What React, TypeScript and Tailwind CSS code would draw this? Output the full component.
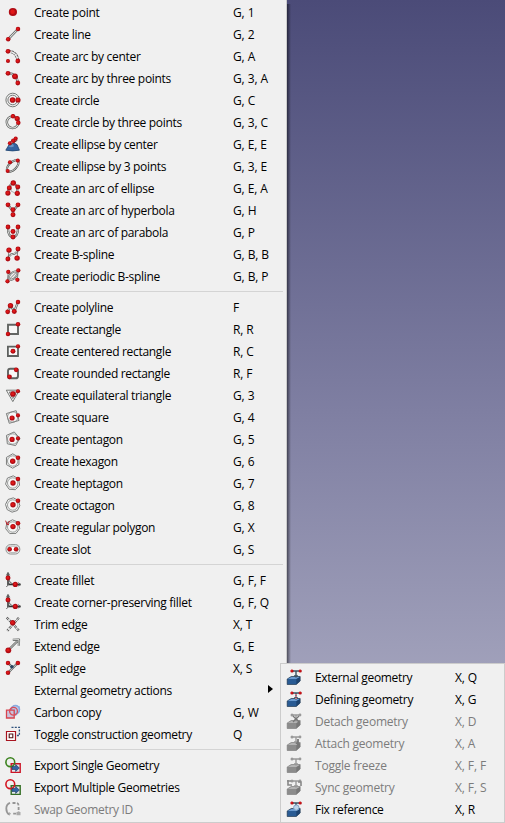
import React from "react";

type P = [number, number, number?];

const FONT = "font-['Open_Sans','Noto_Sans',sans-serif]";

function Balls({ at }: { at: P[] }) {
  return (
    <>
      {at.map(([x, y, r = 2.3], i) => (
        <g key={i}>
          <circle cx={x} cy={y} r={r * 1.08} fill="#b00c14" />
          <circle cx={x - 0.3} cy={y - 0.3} r={r * 0.6} fill="#e01818" />
        </g>
      ))}
    </>
  );
}

/* Double stroked edge: dark outline with a light core */
function Edge({ d, w = 2.4 }: { d: string; w?: number }) {
  return (
    <g fill="none" strokeLinejoin="round">
      <path d={d} stroke="#585b59" strokeWidth={w} />
      <path d={d} stroke="#e6e7e6" strokeWidth={w * 0.42} />
    </g>
  );
}

function ring(cx: number, cy: number, r: number) {
  return `M${cx - r} ${cy}a${r} ${r} 0 1 0 ${2 * r} 0a${r} ${r} 0 1 0 ${-2 * r} 0`;
}

function poly(n: number, cx: number, cy: number, r: number, rot: number) {
  const pts: string[] = [];
  for (let i = 0; i < n; i++) {
    const a = rot + (i * 2 * Math.PI) / n;
    pts.push(`${(cx + r * Math.cos(a)).toFixed(2)} ${(cy + r * Math.sin(a)).toFixed(2)}`);
  }
  return `M${pts.join("L")}Z`;
}

function Polygon({ n, rot, balls }: { n: number; rot: number; balls: P[] }) {
  return (
    <>
      <path d={poly(n, 7.7, 8, 7.2, rot)} fill="#f6f6f6" stroke="#6f7270" strokeWidth=".9" />
      <circle cx="7.7" cy="8" r="5.2" fill="none" stroke="#858986" strokeWidth=".8" />
      <Balls at={balls} />
    </>
  );
}

function Fillet() {
  return (
    <>
      <path d="M3 1V12.5H15.5" fill="none" stroke="#2c2f2e" strokeWidth="1.5" />
      <path d="M4 7.5Q4.5 11.5 9 12" fill="none" stroke="#777" strokeWidth="1.2" />
      <path d="M1.4 3.5L3 .3L4.7 3.5M1.3 15L4.8 11.3M13 10.7L16 12.5L13 14" fill="none" stroke="#666" strokeWidth="1" />
      <Balls at={[[3, 6, 2.3], [10.3, 12.4, 2.4]]} />
    </>
  );
}

function Export({ a, b }: { a: string; b: string }) {
  return (
    <>
      <path d="M6.2 6.7H15.2V15.4H6.2Z" fill="#e4e8ed" stroke={b} strokeWidth="1.4" />
      <circle cx="5.3" cy="5.2" r="4.4" fill="none" stroke={a} strokeWidth="1.6" />
      <path d="M7 9.5H10.6V7.6L14.4 11L10.6 14.4V12.5H7Z" fill="#3465a4" stroke="#17365e" strokeWidth=".6" />
    </>
  );
}

function Ext({ kind }: { kind: string }) {
  const off = kind === "detach" || kind === "attach" || kind === "freeze" || kind === "sync";
  const dark = off ? "#777" : "#12283f";
  return (
    <>
      <path d="M1.2 10L5.2 7.5H14.2V12L10.3 15.5H1.2Z" fill={off ? "#8c8c8c" : "#295b94"} stroke={dark} strokeWidth=".6" />
      <path d="M1.7 10L5.4 7.9H13.7L10.3 10Z" fill={off ? "#b4b4b4" : "#6b9bd0"} />
      <path d="M10.3 10.2L14 8V12L10.3 15.2Z" fill={off ? "#777" : "#1d436f"} />
      <path d="M6 2H14M10 2V8.5M8 6.9H12" stroke={off ? "#999" : "#3c5361"} strokeWidth="1.4" />
      {off ? (
        <>
          <circle cx="6" cy="2" r="1.5" fill="#999" />
          <circle cx="14" cy="2" r="1.4" fill="#999" />
        </>
      ) : (
        <Balls at={[[6, 2, 1.5], [14.2, 2, 1.5]]} />
      )}
      {kind === "define" && <path d="M10 3V9" stroke="#d27886" strokeWidth="2" strokeDasharray="1 1" />}
      {kind === "detach" && <path d="M7 3L13 9M13 3L7 9" stroke="#777" strokeWidth="1.3" />}
      {kind === "attach" && <path d="M12 4V10M10 8L13 9" stroke="#777" strokeWidth="1.8" />}
      {kind === "sync" && <path d="M2 1V6H6M1 2H5M12 3H15V7" fill="none" stroke="#888" strokeWidth="1.6" />}
      {kind === "fix" && <circle cx="10.3" cy="6.6" r="2.7" fill="#bed5e9" stroke="#7ba0c6" strokeWidth="1" />}
    </>
  );
}

const icons: Record<string, React.ReactNode> = {
  point: <Balls at={[[7.9, 8, 3.8]]} />,
  line: <><Edge d="M3.2 13.2L13 3" /><Balls at={[[3.2, 13.2, 2.1], [13, 3, 2.1]]} /></>,
  arcc: <><path d="M3 3.3Q12 3.5 12.9 13" fill="none" stroke="#666" strokeWidth="3" strokeDasharray="2.5 .6" /><path d="M3 3.3Q12 3.5 12.9 13" fill="none" stroke="#eee" strokeWidth="1.3" /><Balls at={[[3, 3.3, 2.2], [3, 13, 1.9], [12.8, 13, 2.2]]} /></>,
  arc3: <><Edge d="M3 3.3Q12 3.5 12.9 13" /><Balls at={[[3, 3.3, 2.2], [10, 6.3, 2.7], [12.8, 13, 2.2]]} /></>,
  circle: <><path d={ring(7.7, 8, 6.8)} fill="none" stroke="#777a78" /><path d={ring(7.7, 8, 4.8)} fill="none" stroke="#777a78" /><Balls at={[[7.6, 8, 2.6], [13, 8, 2.4]]} /></>,
  circle3: <><Edge d={ring(7.6, 8.3, 5.8)} /><Balls at={[[8, 2.2, 2.1], [12.2, 4.6, 2.4], [13.3, 8.8, 2.1]]} /></>,
  ellc: (
    <>
      <path d="M.8 14.2L4 8.8L8 6.5L12 8.6L14.4 14.2Q7.6 15.6 .8 14.2Z" fill="#3464a1" stroke="#1c416d" strokeWidth=".8" />
      <path d="M3.3 10.3L8 8L9 10.2Q6 12.2 3.3 10.3Z" fill="#6b95c5" />
      <path d="M3.6 7.3L10.5 1.8L12 4.5L5.5 8.8Z" fill="#ddd" stroke="#444" strokeWidth=".9" />
      <Balls at={[[4.8, 7.3, 1.8], [8.3, 4.8, 2.1], [10.7, 2.6, 1.9]]} />
    </>
  ),
  ell3: (
    <>
      <g transform="rotate(-44 7.7 8)" fill="none">
        <ellipse cx="7.7" cy="8" rx="7.4" ry="3.7" stroke="#4d504e" strokeWidth="2.1" />
        <ellipse cx="7.7" cy="8" rx="7.4" ry="3.7" stroke="#e2e3e2" strokeWidth=".8" />
      </g>
      <Balls at={[[12.8, 2.6, 1.9], [5, 4.3, 1.9], [2.7, 13, 1.9]]} />
    </>
  ),
  arcell: <><Edge d="M3 13C3 7 6 2 9.5 3.5C13 6 12.6 10 12.3 13.5" w={2} /><path d="M6 5L6 11L10 13" fill="none" stroke="#999" strokeWidth=".8" /><Balls at={[[8.3, 3, 2.5], [12.8, 7, 2.3], [12.3, 13.3, 2.4], [4.3, 8, 2.3], [2.9, 13.1, 2.4]]} /></>,
  hyper: <><Edge d="M3 3L8 9L13 3M8 8V13" w={2.2} /><Balls at={[[3, 2.8, 2.2], [13, 2.8, 2.2], [8, 7.8], [8, 12.8]]} /></>,
  para: <><Edge d="M3 3Q2.8 13 8 13Q13.2 13 13 3" w={2.2} /><Balls at={[[3, 3, 2.2], [13, 3, 2.2], [8, 7.6], [8, 13]]} /></>,
  bspline: <><path d="M4 4L3 13M13 3L12 12" fill="none" stroke="#777" strokeWidth=".9" /><Edge d="M3 13Q5 7.5 8 8T13 3" w={2} /><Balls at={[[4, 4.1, 2.5], [13, 3], [2.9, 13], [12.1, 12.1, 2.5]]} /></>,
  pbspline: <><path d="M3.3 3.7L2.3 13.3L13.3 2.3L12.3 11.7" fill="none" stroke="#777" strokeWidth=".9" /><Edge d="M4 11C3 5 11 2 12 4S9 14 4 11" w={1.8} /><Balls at={[[3.3, 3.9, 2], [13.3, 2.4, 2], [12.4, 11.8, 2], [2.5, 13.3, 2]]} /></>,
  polyline: <><Edge d="M2.7 12.8L5.3 6.4L9.3 12.4L13 3" w={2.2} /><Balls at={[[2.7, 12.8, 2.2], [5.5, 6.6, 2.5], [9.3, 12.4, 2.3], [13, 3, 2.1]]} /></>,
  rect: <><path d="M3 3.7H13V13H3Z" fill="#f7f7f7" stroke="#626563" strokeWidth="1.9" /><Balls at={[[13, 3.3, 2.1], [3, 13, 2.1]]} /></>,
  crect: <><path d="M2.9 3.6H13V13H2.9Z" fill="#f7f7f7" stroke="#5e615f" strokeWidth="1.8" /><Balls at={[[8, 8.2, 2.3], [13, 3.4, 2]]} /></>,
  rrect: <><rect x="3" y="3.7" width="10" height="9.6" rx="2.4" fill="#f7f7f7" stroke="#5f6260" strokeWidth="1.9" /><Balls at={[[11.2, 4.8, 2.2], [4.5, 11.8, 2.2]]} /></>,
  tri: <><path d="M1.3 3.2H14.4L7.8 14.6Z" fill="#f7f7f7" stroke="#686b69" strokeWidth=".9" /><path d="M4.2 5H11.6L7.8 11.6Z" fill="none" stroke="#777" strokeWidth=".9" /><Balls at={[[8, 7, 2.6], [13, 4.2, 1.9]]} /></>,
  square: <Polygon n={4} rot={0.5} balls={[[7.1, 9, 2.4], [13, 6.4, 1.9]]} />,
  penta: <Polygon n={5} rot={-0.1} balls={[[7.1, 8.4, 2.4], [13, 7.4, 1.9]]} />,
  hexa: <Polygon n={6} rot={-0.52} balls={[[7.7, 8.3, 2.5], [13, 4.8, 2.1]]} />,
  hepta: <Polygon n={7} rot={-0.6} balls={[[8, 8, 2.5], [13, 4, 2.1]]} />,
  octa: <Polygon n={8} rot={-0.7} balls={[[8, 7.8, 2.5], [13, 3.8, 2.1]]} />,
  regular: <><Polygon n={7} rot={-0.7} balls={[[8, 7.6, 2.5], [13, 4.2, 2.1]]} /><path d="M.6 1.7L2.3 5.8L4.5 2M1 4.5L4 5.8" fill="none" stroke="#b5242c" /></>,
  slot: <><rect x="1" y="3.6" width="13.8" height="9.4" rx="4.4" fill="#eee" stroke="#858886" strokeWidth=".9" /><rect x="2.6" y="5.2" width="10.6" height="6.2" rx="3.1" fill="#fff" stroke="#999" strokeWidth=".7" /><Balls at={[[4.7, 8.3, 2.1], [11, 8.3, 2.1]]} /></>,
  fillet: <Fillet />,
  trim: <><path d="M1.7 1.5L8 8L13.8 14.6M13.8 1.8L2.3 14.8" fill="none" stroke="#555" strokeWidth="2.2" strokeDasharray="3 .8" /><path d="M1.7 1.5L8 8L13.8 14.6M13.8 1.8L2.3 14.8" fill="none" stroke="#eee" strokeWidth=".9" /><Balls at={[[7.7, 6.8, 2.5]]} /></>,
  extend: <><Edge d="M4 11.5L12.8 2.7M7.8 1.8L14 1.6L13.8 7.8" w={2.2} /><Balls at={[[3.3, 12.3, 2.7]]} /></>,
  split: <><Edge d="M3 12.8L12.7 3M3 3L6.7 6.5" w={2.2} /><Balls at={[[3, 3, 2.1], [12.9, 3, 2.1], [3, 12.8, 2.1]]} /><circle cx="6.9" cy="6.8" r="1.8" fill="#29445f" /></>,
  carbon: (
    <>
      <path d="M4 6L7 2H15V8L11 12H4Z" fill="#9fbbea" opacity=".75" />
      <circle cx="10.4" cy="5.6" r="4.1" fill="none" stroke="#8aaade" strokeWidth="1.5" />
      <path d="M1.5 6.2H9.2V14H1.5Z" fill="#c9c3dd" stroke="#d8434d" strokeWidth="1.3" />
      <circle cx="8.5" cy="7.2" r="3.9" fill="none" stroke="#dc4d58" strokeWidth="1.3" />
    </>
  ),
  toggle: (
    <>
      <path d="M6.5 1.4H14.4V9.5H10.5" fill="none" stroke="#2e527d" strokeWidth="1.3" strokeDasharray="2 1.3" />
      <path d="M1.5 5.5H10.5V14.5H1.5Z" fill="#fff" stroke="#a81420" strokeWidth="1.2" />
      <path d="M4.2 8H7.8V11.8H4.2Z" fill="#fff" stroke="#501014" strokeWidth="1.1" />
    </>
  ),
  exp1: <Export a="#3c831f" b="#cc1426" />,
  exp2: <Export a="#d41622" b="#346e24" />,
  swap: <><path d="M5 1.8Q1.3 3.2 1.3 7.5T4.2 13.6" fill="none" stroke="#969696" strokeWidth="1.8" /><path d="M7.5 2H12Q13.6 2.5 13.6 5V12.7H7" fill="none" stroke="#969696" strokeWidth="1.8" strokeDasharray="3 1.5" /><path d="M11.5 11H15.5V14.3H11.5ZM4 11L6 12.5L4 15Z" fill="#aaa" /></>,
  ext: <Ext kind="ext" />,
  define: <Ext kind="define" />,
  detach: <Ext kind="detach" />,
  attach: <Ext kind="attach" />,
  freeze: <Ext kind="freeze" />,
  sync: <Ext kind="sync" />,
  fix: <Ext kind="fix" />,
};

type Item = { icon?: string; label: string; keys?: string; off?: boolean };

const groups: Item[][] = [
  [
    { icon: "point", label: "Create point", keys: "G, 1" },
    { icon: "line", label: "Create line", keys: "G, 2" },
    { icon: "arcc", label: "Create arc by center", keys: "G, A" },
    { icon: "arc3", label: "Create arc by three points", keys: "G, 3, A" },
    { icon: "circle", label: "Create circle", keys: "G, C" },
    { icon: "circle3", label: "Create circle by three points", keys: "G, 3, C" },
    { icon: "ellc", label: "Create ellipse by center", keys: "G, E, E" },
    { icon: "ell3", label: "Create ellipse by 3 points", keys: "G, 3, E" },
    { icon: "arcell", label: "Create an arc of ellipse", keys: "G, E, A" },
    { icon: "hyper", label: "Create an arc of hyperbola", keys: "G, H" },
    { icon: "para", label: "Create an arc of parabola", keys: "G, P" },
    { icon: "bspline", label: "Create B-spline", keys: "G, B, B" },
    { icon: "pbspline", label: "Create periodic B-spline", keys: "G, B, P" },
  ],
  [
    { icon: "polyline", label: "Create polyline", keys: "F" },
    { icon: "rect", label: "Create rectangle", keys: "R, R" },
    { icon: "crect", label: "Create centered rectangle", keys: "R, C" },
    { icon: "rrect", label: "Create rounded rectangle", keys: "R, F" },
    { icon: "tri", label: "Create equilateral triangle", keys: "G, 3" },
    { icon: "square", label: "Create square", keys: "G, 4" },
    { icon: "penta", label: "Create pentagon", keys: "G, 5" },
    { icon: "hexa", label: "Create hexagon", keys: "G, 6" },
    { icon: "hepta", label: "Create heptagon", keys: "G, 7" },
    { icon: "octa", label: "Create octagon", keys: "G, 8" },
    { icon: "regular", label: "Create regular polygon", keys: "G, X" },
    { icon: "slot", label: "Create slot", keys: "G, S" },
  ],
  [
    { icon: "fillet", label: "Create fillet", keys: "G, F, F" },
    { icon: "fillet", label: "Create corner-preserving fillet", keys: "G, F, Q" },
    { icon: "trim", label: "Trim edge", keys: "X, T" },
    { icon: "extend", label: "Extend edge", keys: "G, E" },
    { icon: "split", label: "Split edge", keys: "X, S" },
    { label: "External geometry actions" },
    { icon: "carbon", label: "Carbon copy", keys: "G, W" },
    { icon: "toggle", label: "Toggle construction geometry", keys: "Q" },
  ],
  [
    { icon: "exp1", label: "Export Single Geometry" },
    { icon: "exp2", label: "Export Multiple Geometries" },
    { icon: "swap", label: "Swap Geometry ID", off: true },
  ],
];

const subItems: Item[] = [
  { icon: "ext", label: "External geometry", keys: "X, Q" },
  { icon: "define", label: "Defining geometry", keys: "X, G" },
  { icon: "detach", label: "Detach geometry", keys: "X, D", off: true },
  { icon: "attach", label: "Attach geometry", keys: "X, A", off: true },
  { icon: "freeze", label: "Toggle freeze", keys: "X, F, F", off: true },
  { icon: "sync", label: "Sync geometry", keys: "X, F, S", off: true },
  { icon: "fix", label: "Fix reference", keys: "X, R" },
];

function Row({ item, sub }: { item: Item; sub?: boolean }) {
  return (
    <div className={`flex h-[22px] items-start pl-[5px] text-[12px] leading-[22px] whitespace-nowrap ${item.off ? "text-[#7c7c7c]" : "text-black"}`}>
      <svg viewBox="0 0 16 16" className="mt-[2px] size-4 shrink-0">
        {item.icon && icons[item.icon]}
      </svg>
      <span className={`ml-[13px] shrink-0 ${sub ? "w-[140px]" : "w-[199px]"} ${sub && item.off ? "tracking-[-0.22px]" : "tracking-[-0.31px]"}`}>{item.label}</span>
      {item.keys && <span className="tracking-[-0.1px]">{item.keys}</span>}
      {!item.keys && item.label.endsWith("actions") && (
        <svg viewBox="0 0 5 8" className="mt-[5px] ml-[35px] h-2 w-[5px]">
          <path d="M0 0L5 4L0 8Z" fill="#000" />
        </svg>
      )}
    </div>
  );
}

export default function App() {
  return (
    <div className={`relative flex h-[823px] w-[505px] overflow-hidden bg-linear-to-b from-[#4b4b78] via-[#7f7fa2] via-50% to-[#b5b5c9] ${FONT}`}>
      <div className="h-[823px] w-[287px] shrink-0 border-r border-b border-[#cccccc] bg-[#f0f0f0] pt-[2px]">
        {groups.map((group, i) => (
          <div key={i}>
            {i > 0 && (
              <div className="h-[9px] pt-[3px] pr-[3px] pl-[30px]">
                <div className="h-px bg-[#d4d4d4]" />
              </div>
            )}
            {group.map((item) => <Row key={item.label} item={item} />)}
          </div>
        ))}
      </div>
      <div className="mt-[4px] h-[819px] w-[4px] bg-linear-to-r from-black/50 to-transparent" />
      <div className="absolute top-[663px] left-[280px] h-[160px] w-[225px] border border-[#cccccc] bg-[#f0f0f0] pt-[3px]">
        {subItems.map((item) => <Row key={item.label} item={item} sub />)}
      </div>
    </div>
  );
}
